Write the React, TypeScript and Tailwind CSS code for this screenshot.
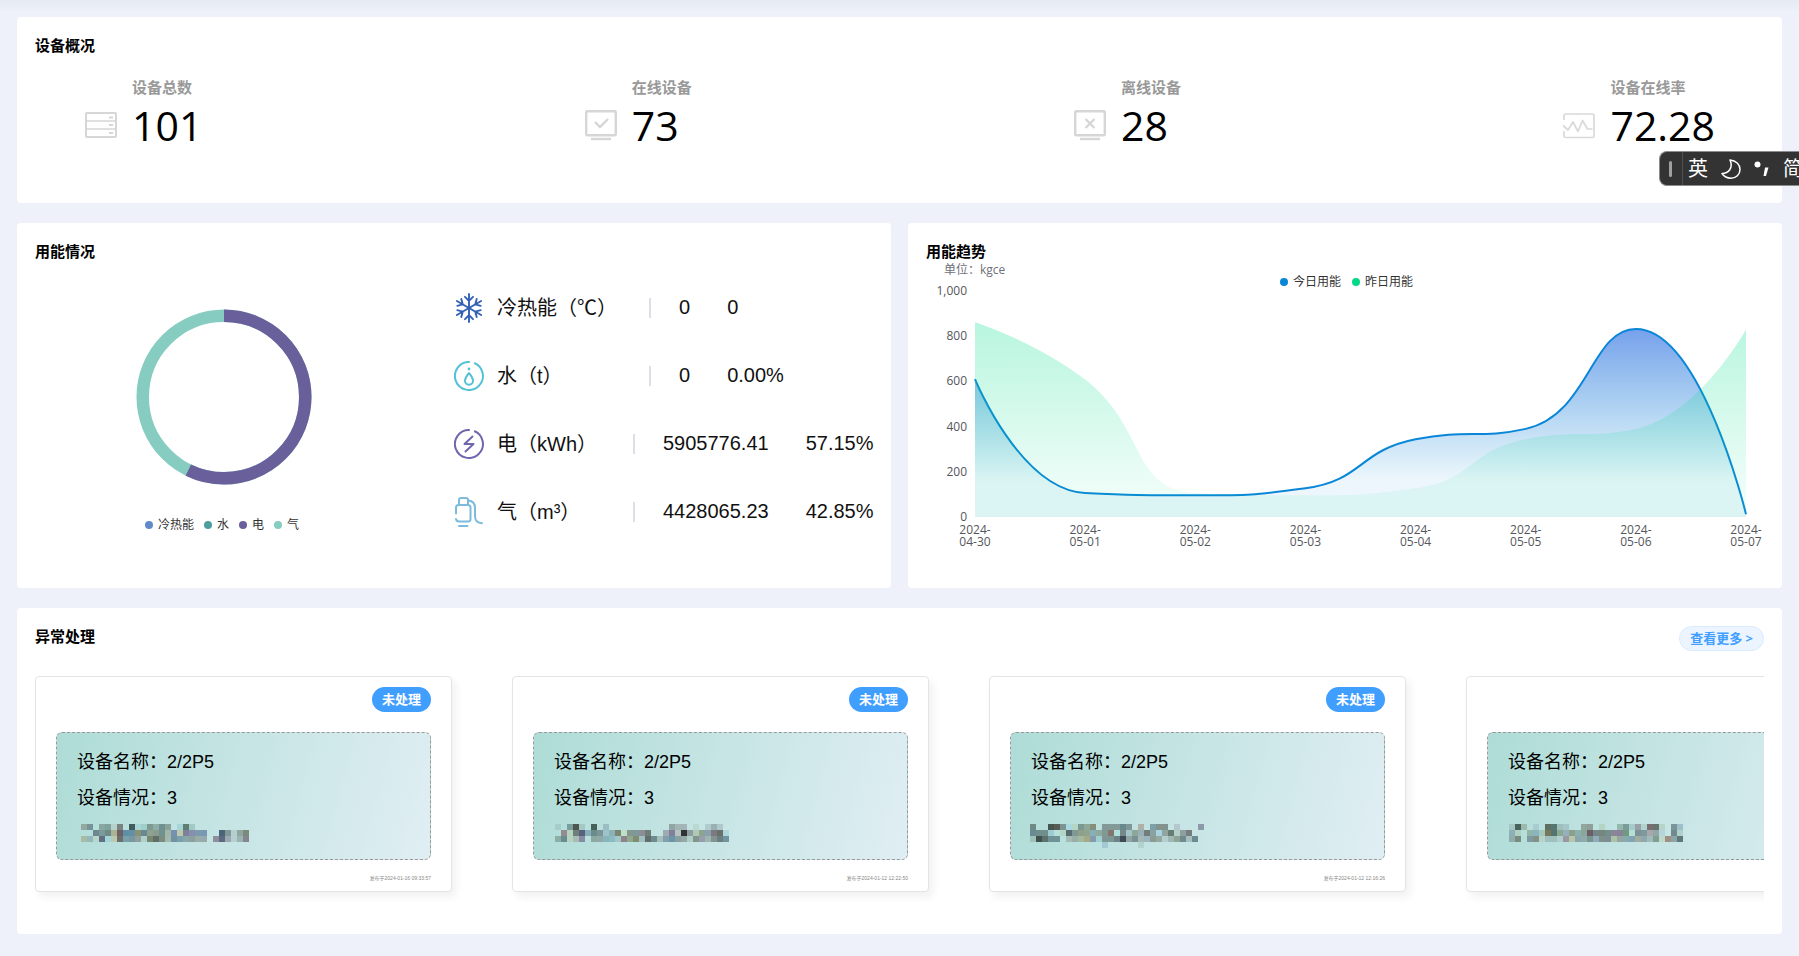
import React from "react";

type Point = [number, number];

const UI_FONT = "font-['Open_Sans','Noto_Sans_CJK_SC',sans-serif]";
const DATA_FONT = "font-['Liberation_Sans','Noto_Sans_CJK_SC',sans-serif]";

function ServerIcon() {
  return (
    <svg className="h-8 w-8" viewBox="0 0 32 32" fill="none" stroke="#d6d6d6" strokeWidth="2" aria-hidden="true">
      <rect x="1" y="4" width="30" height="24" rx="1" />
      <path d="M1 12h30M1 20h30" strokeWidth="1.6" />
      <path d="M24 8.500h4M24 16h4M24 24h4" strokeWidth="1.8" />
    </svg>
  );
}

function MonitorIcon({ mark }: { mark: "check" | "cross" }) {
  return (
    <svg className="h-8 w-8" viewBox="0 0 32 32" fill="none" stroke="#d6d6d6" strokeWidth="2.4" aria-hidden="true">
      <rect x="1.200" y="2.200" width="29.600" height="24" rx="1" />
      <path d="M6 30h20" />
      {mark === "check" ? <path d="M10 13l5 5 8-8" /> : <path d="M11.500 10l9 9M20.500 10l-9 9" />}
    </svg>
  );
}

function PulseIcon() {
  return (
    <svg className="h-8 w-8" viewBox="0 0 32 32" fill="none" stroke="#d9d9d9" strokeWidth="1.7" aria-hidden="true">
      <path d="M1 11V6.500Q1 5 2.500 5h27Q31 5 31 6.500v20.500Q31 28.500 29.500 28.500h-27Q1 28.500 1 27v-5" />
      <path d="M0 16.500l5 4.500 5-8 5 9.500 4.500-11 5 8.500h5" strokeLinejoin="round" />
    </svg>
  );
}

function SnowIcon() {
  return (
    <svg className="h-[30px] w-[30px]" viewBox="0 0 30 30" fill="none" stroke="#3260b5" strokeWidth="1.9" strokeLinecap="round" aria-hidden="true">
      {[0, 60, 120, 180, 240, 300].map((a) => (
        <path key={a} d="M15 15V1M11 3.800l4 4 4-4" transform={`rotate(${a} 15 15)`} />
      ))}
    </svg>
  );
}

function WaterIcon() {
  return (
    <svg className="h-[30px] w-[30px]" viewBox="0 0 30 30" fill="none" stroke="#53c1d6" strokeWidth="2" aria-hidden="true">
      <path d="M20.200 2A14 14 0 1 1 15.800 1" />
      <path d="M15 12c-2 2.800-4 4.800-4 7.700a4 4 0 0 0 8 0c0-2.900-2-4.900-4-7.700z" strokeLinejoin="round" />
      <circle cx="15" cy="8" r="1.400" fill="#53c1d6" stroke="none" />
    </svg>
  );
}

function PowerIcon() {
  return (
    <svg className="h-[30px] w-[30px]" viewBox="0 0 30 30" fill="none" stroke="#6f67ae" strokeWidth="2" aria-hidden="true">
      <path d="M20.200 2A14 14 0 1 1 15.800 1" />
      <path d="M18.500 7.500L10.500 15h9l-8 7.500" strokeLinejoin="round" strokeLinecap="round" />
    </svg>
  );
}

function GasIcon() {
  return (
    <svg className="h-[30px] w-[30px]" viewBox="0 0 30 30" fill="none" stroke="#7dbbdd" strokeWidth="2" strokeLinecap="round" aria-hidden="true">
      <path d="M2 16.500V10.500Q2 8 4.500 8h9.500Q16.500 8 16.500 10.500V22q0 2.500-2.500 2.500H5q-2.500 0-3-2.500" />
      <path d="M5 7.500V3Q5 1 7 1h5q2 0 2 2v4.500" />
      <path d="M14.500 3.500C19 4 21 6.500 21 11v8c0 4.500 2.500 7 7 7.300" />
      <path d="M5 29h8.500" />
    </svg>
  );
}

const stats = [
  { label: "设备总数", value: "101", icon: <ServerIcon /> },
  { label: "在线设备", value: "73", icon: <MonitorIcon mark="check" /> },
  { label: "离线设备", value: "28", icon: <MonitorIcon mark="cross" /> },
  { label: "设备在线率", value: "72.28", icon: <PulseIcon /> },
];

const energy = [
  { label: "冷热能（℃）", amount: "0", share: "0", icon: <SnowIcon />, labelWidth: "w-[152px]" },
  { label: "水（t）", amount: "0", share: "0.00%", icon: <WaterIcon />, labelWidth: "w-[152px]" },
  { label: "电（kWh）", amount: "5905776.41", share: "57.15%", icon: <PowerIcon />, labelWidth: "w-[136px]" },
  { label: "气（m³）", amount: "4428065.23", share: "42.85%", icon: <GasIcon />, labelWidth: "w-[136px]" },
];

const energyLegend = [
  { label: "冷热能", dot: "bg-[#6289cb]" },
  { label: "水", dot: "bg-[#4c9f9c]" },
  { label: "电", dot: "bg-[#685f9b]" },
  { label: "气", dot: "bg-[#86ccc0]" },
];

function Donut() {
  const r = 81.25;
  const length = 2 * Math.PI * r;
  const power = length * 0.5715;
  return (
    <svg className="h-44 w-44" viewBox="0 0 176 176" fill="none" strokeWidth="12.500" role="img" aria-label="用能占比">
      <circle cx="88" cy="88" r={r} stroke="#86ccc0" />
      <circle cx="88" cy="88" r={r} stroke="#685f9b" strokeDasharray={`${power} ${length - power}`} transform="rotate(-90 88 88)" />
    </svg>
  );
}

/* Monotone-limited cubic smoothing through the data points. */
function smoothPath(points: Point[], smooth = 0.5): string {
  const clamp = (v: number, a: number, b: number) => Math.max(Math.min(v, Math.max(a, b)), Math.min(a, b));
  let cp0: Point = points[0];
  let d = `M${points[0][0]} ${points[0][1]}`;
  for (let i = 1; i < points.length; i++) {
    const [x, y] = points[i];
    const [px, py] = points[i - 1];
    let cp1: Point = [x, y];
    let nextCp: Point = [x, y];
    if (i < points.length - 1) {
      const [nx, ny] = points[i + 1];
      const prevLen = Math.hypot(x - px, y - py);
      const nextLen = Math.hypot(nx - x, ny - y);
      const ratio = nextLen / (nextLen + prevLen);
      const cx = clamp(x + (nx - px) * smooth * ratio, nx, x);
      const cy = clamp(y + (ny - py) * smooth * ratio, ny, y);
      cp1 = [
        clamp(x - ((cx - x) * prevLen) / nextLen, px, x),
        clamp(y - ((cy - y) * prevLen) / nextLen, py, y),
      ];
      nextCp = [x + ((x - cp1[0]) * nextLen) / prevLen, y + ((y - cp1[1]) * nextLen) / prevLen];
    }
    d += `C${cp0[0]} ${cp0[1]} ${cp1[0]} ${cp1[1]} ${x} ${y}`;
    cp0 = nextCp;
  }
  return d;
}

const days = ["04-30", "05-01", "05-02", "05-03", "05-04", "05-05", "05-06", "05-07"];
const today = [610, 106, 96, 127, 344, 390, 832, 12];
const yesterday = [862, 608, 106, 96, 127, 344, 390, 830];
const LEFT = 67;
const RIGHT = 838;
const BASE = 254;
const TOP = 28;

const toPoints = (values: number[]): Point[] =>
  values.map((v, i) => [LEFT + (i * (RIGHT - LEFT)) / (values.length - 1), BASE - (v / 1000) * (BASE - TOP)]);

function TrendChart() {
  const todayLine = smoothPath(toPoints(today));
  const yesterdayLine = smoothPath(toPoints(yesterday));
  const close = `L${RIGHT} ${BASE}L${LEFT} ${BASE}Z`;
  return (
    <svg className="block h-auto w-full overflow-visible text-[12px]" viewBox="0 0 874 295" fill="none" role="img" aria-label="用能趋势">
      <defs>
        <linearGradient id="todayFill" x1="0" y1="0" x2="0" y2="1">
          <stop offset="0" stopColor="rgb(27,97,222)" stopOpacity="0.6" />
          <stop offset="0.800" stopColor="rgb(0,136,212)" stopOpacity="0.075" />
          <stop offset="1" stopColor="rgb(0,136,212)" stopOpacity="0.075" />
        </linearGradient>
        <linearGradient id="yesterdayFill" x1="0" y1="0" x2="0" y2="1">
          <stop offset="0" stopColor="rgb(0,221,140)" stopOpacity="0.28" />
          <stop offset="0.850" stopColor="rgb(0,221,140)" stopOpacity="0.07" />
          <stop offset="1" stopColor="rgb(0,221,140)" stopOpacity="0.07" />
        </linearGradient>
      </defs>
      <text x="36" y="11" fill="#6e7079">单位：kgce</text>
      <circle cx="376" cy="19" r="4" fill="#0a86d6" />
      <text x="385" y="23" fill="#333333">今日用能</text>
      <circle cx="448" cy="19" r="4" fill="#05d988" />
      <text x="457" y="23" fill="#333333">昨日用能</text>
      {[0, 200, 400, 600, 800, 1000].map((v) => (
        <text key={v} x="59" y={BASE + 4 - (v / 1000) * (BASE - TOP)} textAnchor="end" fill="#54565c">
          {v.toLocaleString("en-US")}
        </text>
      ))}
      <path d={todayLine + close} fill="url(#todayFill)" />
      <path d={todayLine} stroke="#0a86d8" strokeWidth="2" />
      <path d={yesterdayLine + close} fill="url(#yesterdayFill)" />
      {days.map((day, i) => {
        const x = LEFT + (i * (RIGHT - LEFT)) / (days.length - 1);
        return (
          <text key={day} textAnchor="middle" fill="#54565c">
            <tspan x={x} y="271">2024-</tspan>
            <tspan x={x} y="283">{day}</tspan>
          </text>
        );
      })}
    </svg>
  );
}

const mosaics = [
  {
    offset: 4,
    rows: [
      "93a9a0 77939a - 89a6a0 7fa29f b5d3ca 7c827f - 3f5b5e a8d4d5 a0cfcb 7c9a90 8cada8 6f918f 88a39c - a5d5d8 5f7d70 a3c9c6",
      "- - 6c8790 7b9a98 6f8b88 abb292 6d6165 5f8ea8 6290a8 8b9272 678a92 8fa190 8b9c8c 6f928e a3b5a6 7590b2 bcc9ad 80809a 8590ae 7b9bac 7a98b3 - - 4b6478 7f9797 b5cfcf 8fa59f 7b8a7b",
      "a8bba6 94b9bd b7d6cc 626f80 a2d5db bac9b0 6d6f68 78a0aa 7897a0 8fa09a b0d0cb 788870 5f6e66 7c8c80 a5b8b0 6f93a0 7aa0ac 87a8a8 8f9fa0 98ada8 96a9ac - 8e8e9c 5a6b80 9ba8b2 b5cfcf 9ab4b5 85858f",
    ],
  },
  {
    offset: 1,
    rows: [
      "a6cdc8 - 7a9da0 4c564f a3c8c6 - 46605a - 9abfc2 - - - - - - - - - - 8fa5a6 a5b5b6 a3b5b6 - b9d9d2 - b0cbce 9bb0b0 b0c8cb",
      "- 928c92 b5d3c0 6d7f78 57617e 86aeb8 6a8a8c 7a9498 9dc3c8 8cb0b8 7c8570 bde0c8 84968f 7f9899 8d8d98 6f7d78 - - 9dabb0 80809a b5c4c2 2f3336 8c9ea2 b0c8b6 8ba48e 8aa0b0 7c7a7c 68706c b0d6e0",
      "8cafa5 6a8c90 b5d5c0 a8bcb5 858ba0 - 8aaaa0 90a8a8 88b5bc 8abcc4 a5c5c8 8c8588 8fa88f 818d6f a0bfc2 5f6d6b 6d8b8b a5c0bc 839eac 6c95a8 8aa0a0 93a9a6 b0cfc9 83958b 95a0ac a0b5b0 839395 6b7f82 71949f",
    ],
  },
  {
    offset: -1,
    rows: [
      "6f8985 - - 475450 575c54 7b9392 aad8e0 b6d6c4 7c9895 8fa896 848e7b - 839998 839998 839998 67898b 7e9696 - b0b0a8 - 7ca0a8 82928f 82928f - b5c6cd - - - 8c99a8",
      "688a90 708f8b 708f8b 9ccbd4 - b5d5c4 556d70 7f9894 8f9f88 8fa592 85b0b5 8fa8a0 819895 85756f aee0de 77878a a0c4c8 8ca795 98b0b8 727c78 8ba0a2 a8d4e0 90a5a0 667d74 b5d0c8 8da0a0 767c80",
      "9fc2b8 3f504f 5c716c 6f9296 6f9296 - a5bab5 9aada6 a3baa0 a4aa88 859cae a0cfd0 7f9794 7f9794 6d8388 3e4a56 92a5a6 7a9194 a5b8b8 9bb5c0 8b9c94 93a9a2 b5cfcf 9fb8b4 8fa496 6e8a8c a5c0bf 6c8a94",
      "- - - - - - - - - - - - a3c9d2 - - - - - b0d3d0",
    ],
  },
  {
    offset: 1,
    rows: [
      "a5c6c5 45655a 9fb8ac - a8ccd0 - 607060 55756f 9dc0bc a5c5c8 - - 92a59e 8fa098 - b5d5c4 - - 95b8ac 7a9c98 a5cccc 9ba0a6 b0d5d0 7a6e70 66746f b5d5c8 - 7a9598 9dc0c8",
      "8bb0b8 b0d0c0 - 93b5a8 88b5bf a3c8bc 787858 547472 8ba890 95b0bc 8ba08a 8cb0ac 8aa79b 6d5d68 738688 77857f 72908a 8c8498 888498 709a80 b5dfd4 7e9098 7b9aa0 a8a8ac 93a8a4 b5d5d8 - 738990 b0d0cc",
      "90acae 788c80 - 7d9ba0 83908a b8d4c8 a0c0c0 a0c0bc b0cfd0 99999f b5c7a8 8aa6b0 8fabac 7b9490 8fabbe 7f9088 7b8c94 acc2a8 96a5a0 85aab0 81a4b0 a0ac9f 8ea8ac a0bcb8 809f94 c0d8cc a09080 8aa4aa 5f7878",
    ],
  },
];

function MaskedLine({ index }: { index: number }) {
  const { offset, rows } = mosaics[index];
  return (
    <svg className="block h-[18px] w-[180px] overflow-visible" viewBox="0 0 180 18" shapeRendering="crispEdges" aria-hidden="true">
      {rows.map((row, r) =>
        row.split(" ").map((cell, c) =>
          cell === "-" ? null : (
            <rect key={`${r}-${c}`} x={offset + c * 6} y={r * 6} width="6" height="6" fill={`#${cell}`} />
          ),
        ),
      )}
    </svg>
  );
}

const alerts = [
  { name: "2/2P5", state: "3", time: "2024-01-16 09:33:57" },
  { name: "2/2P5", state: "3", time: "2024-01-12 12:22:50" },
  { name: "2/2P5", state: "3", time: "2024-01-12 12:16:26" },
  { name: "2/2P5", state: "3", time: "2024-01-12 12:10:18" },
];

function Panel({ title, action, children }: { title: string; action?: React.ReactNode; children: React.ReactNode }) {
  return (
    <section className="min-w-0 rounded bg-white pt-[17px]">
      <div className="flex h-[22px] items-center justify-between px-[18px]">
        <h2 className="text-[15px] leading-[22px] font-bold">{title}</h2>
        {action}
      </div>
      {children}
    </section>
  );
}

function InputMethodBar() {
  return (
    <div className="absolute top-[151px] right-0 flex h-[35px] w-[140px] items-center overflow-hidden rounded-l-lg border border-r-0 border-[#8c8c8c] bg-[#333333] text-[20px] whitespace-nowrap text-white">
      <span className="ml-[9px] h-4 w-[3px] shrink-0 rounded-full bg-[#a0a0a0]" />
      <span className="ml-[10px] h-full w-px shrink-0 bg-[#505050]" />
      <button type="button" className="ml-[5px] shrink-0">英</button>
      <button type="button" aria-label="半角" className="ml-[13px] shrink-0">
        <svg className="h-5 w-5" viewBox="0 0 20 20" fill="none" stroke="white" strokeWidth="1.500" strokeLinejoin="round">
          <path d="M9 1C15 1.500 19 5.500 19 10.500C19 15.500 15 19.200 10 19.200C6.500 19.200 3 17.500 1 14.500C7.500 14.500 12.500 9 9 1Z" />
        </svg>
      </button>
      <button type="button" aria-label="标点" className="ml-3 shrink-0">
        <svg className="h-5 w-5" viewBox="0 0 20 20" fill="white">
          <circle cx="4.500" cy="5.500" r="3" />
          <path d="M12 8.500h3.500L13 17h-2.500z" />
        </svg>
      </button>
      <button type="button" className="ml-[10px] shrink-0">简</button>
    </div>
  );
}

export default function App() {
  return (
    <div className={`relative min-h-screen overflow-hidden bg-[#eef1fa] text-black ${UI_FONT}`}>
      <div className="absolute inset-x-0 top-0 h-3 bg-linear-to-b from-[#e5e9f1] to-[#eef1fa]" />
      <main className="relative flex flex-col gap-5 px-[17px] pt-[17px] pb-[22px]">
        <Panel title="设备概况">
          <div className="mt-[21px] flex justify-between pr-[67px] pb-[50px] pl-[68px]">
            {stats.map((s) => (
              <div key={s.label} className="flex items-end gap-[15px]">
                <div className="flex h-14 items-center">{s.icon}</div>
                <div>
                  <p className="text-[15px] leading-5 font-bold text-[#999999]">{s.label}</p>
                  <p className="text-[41px] leading-[56px]">{s.value}</p>
                </div>
              </div>
            ))}
          </div>
        </Panel>

        <div className="grid grid-cols-2 gap-[17px]">
          <Panel title="用能情况">
            <div className="flex pr-[17px]">
              <div className="flex flex-1 flex-col items-center pt-[47px] pr-[23px]">
                <Donut />
                <ul className="mt-8 flex gap-[10px] pr-1 text-[12px] leading-4 text-[#333333]">
                  {energyLegend.map((item) => (
                    <li key={item.label} className="flex items-center gap-[5px]">
                      <span className={`h-2 w-2 rounded-full ${item.dot}`} />
                      {item.label}
                    </li>
                  ))}
                </ul>
              </div>
              <ul className={`flex w-[420px] shrink-0 flex-col pt-3 pb-[42px] text-[20px] text-[#111111] ${DATA_FONT}`}>
                {energy.map((e) => (
                  <li key={e.label} className="flex h-[68px] items-center whitespace-nowrap">
                    {e.icon}
                    <span className={`ml-[13px] shrink-0 ${e.labelWidth}`}>{e.label}</span>
                    <span className="h-5 w-[2px] shrink-0 bg-[#dcdfe6]" />
                    <span className="ml-7 pb-0.5">{e.amount}</span>
                    <span className="ml-[37px] pb-0.5">{e.share}</span>
                  </li>
                ))}
              </ul>
            </div>
          </Panel>
          <Panel title="用能趋势">
            <div className="pt-px">
              <TrendChart />
            </div>
          </Panel>
        </div>

        <Panel
          title="异常处理"
          action={
            <button type="button" className="mt-1 h-[25px] rounded-full border border-[#d9ecff] bg-[#ecf5ff] px-[10px] text-[13px] leading-5 font-bold text-[#409eff]">
              查看更多 &gt;
            </button>
          }
        >
          <div className="mx-[18px] mt-[29px] flex gap-[60px] overflow-hidden pb-[42px]">
            {alerts.map((a, i) => (
              <article key={a.time} className={`flex w-[417px] shrink-0 flex-col rounded border border-[#e4e4e4] bg-white px-5 pt-[10px] pb-[9px] shadow-[4px_5px_8px_rgba(0,0,0,0.06)] ${DATA_FONT}`}>
                <span className="self-end rounded-full bg-[#409eff] px-[10px] text-[13px] leading-[25px] font-bold text-white">未处理</span>
                <div className="mt-5 h-32 rounded-md border border-dashed border-[#999999] bg-[linear-gradient(105deg,#aedcd6,#e0eef3)] pt-[11px] pl-5 text-[18px] leading-9">
                  <p>设备名称：{a.name}</p>
                  <p>设备情况：{a.state}</p>
                  <div className="pt-2">
                    <MaskedLine index={i} />
                  </div>
                </div>
                <time className="mt-[14px] text-right text-[5px] leading-[8px] text-[#888888]">发布于{a.time}</time>
              </article>
            ))}
          </div>
        </Panel>
      </main>
      <InputMethodBar />
    </div>
  );
}
